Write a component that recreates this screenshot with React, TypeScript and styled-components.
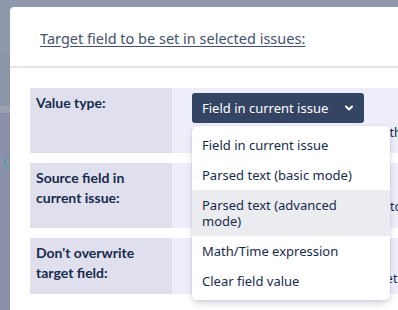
import React from 'react';
import styled, { createGlobalStyle } from 'styled-components';

const GlobalStyle = createGlobalStyle`
    html, body {
        margin: 0;
        padding: 0;
        overflow: hidden;
        background: #8d96aa;
    }
    body {
        font-family: "Noto Sans", "Open Sans", sans-serif;
    }
`;

const Backdrop = styled.div`
    width: 398px;
    height: 310px;
    padding: 7px 0 0 10px;
    box-sizing: border-box;
    background: linear-gradient(#8f99ab 0 53px, #8c96a9 53px 106px, #9aa1b2 106px 113px, #8a91a8 113px);
    position: relative;
    overflow: hidden;

    &::before {
        content: '';
        position: absolute;
        left: 4px;
        top: 156px;
        width: 11px;
        height: 11px;
        border: 1.5px solid #2aa3b8;
        border-radius: 50%;
    }
`;

const Modal = styled.div`
    position: relative;
    width: 460px;
    height: 340px;
    background: #fff;
    border-radius: 4px 0 0 0;
`;

const Header = styled.header`
    height: 59px;
    padding-left: 30px;
    display: flex;
    align-items: center;
    border-bottom: 2px solid #e4e5ef;
`;

const Title = styled.h2`
    margin: 2px 0 0;
    font-size: 14.5px;
    font-weight: 400;
    color: #42526e;
    text-decoration: underline;
    text-underline-offset: 2px;
`;

const Body = styled.div`
    padding: 20px 0 0 20px;
    display: flex;
    flex-direction: column;
    gap: 10px;
`;

const Row = styled.div<{ $h: number }>`
    display: grid;
    grid-template-columns: 142px 1fr;
    height: ${p => p.$h}px;
`;

const Label = styled.div`
    background: #dfdfee;
    padding: 5px 6px 0;
    font-family: "Lato", sans-serif;
    font-weight: 700;
    font-size: 14px;
    line-height: 19.5px;
    color: #172b4d;
`;

const Value = styled.div`
    background: #eeeefb;
    padding: 5px 0 0 20px;
    position: relative;
    font-size: 12.5px;
    color: #172b4d;
`;

const Hint = styled.div<{ $top: number }>`
    padding-top: ${p => p.$top}px;
    white-space: nowrap;
    line-height: 16px;
`;

const SelectButton = styled.button`
    width: 172px;
    height: 30px;
    padding: 0 10px;
    display: flex;
    align-items: center;
    justify-content: space-between;
    background: #344563;
    color: #fff;
    border: none;
    border-radius: 3px;
    font-family: "Noto Sans", "Open Sans", sans-serif;
    font-size: 13px;
`;

const Menu = styled.ul`
    position: absolute;
    left: 20px;
    top: 38px;
    width: 198px;
    margin: 0;
    padding: 4px 0;
    list-style: none;
    background: #fff;
    border-radius: 4px;
    box-shadow: 0 4px 8px -2px rgba(9, 30, 66, 0.25), 0 0 1px rgba(9, 30, 66, 0.31);
    z-index: 2;
`;

const Item = styled.li<{ $active?: boolean }>`
    padding: 7px 26px 7px 10px;
    font-size: 13px;
    line-height: 16px;
    color: #172b4d;
    background: ${p => (p.$active ? '#ebecf0' : 'transparent')};
`;

function Chevron() {
    return (
        <svg width="10" height="10" viewBox="0 0 10 10">
            <path d="M2 3.5 L5 6.5 L8 3.5" fill="none" stroke="#fff" strokeWidth="2" strokeLinecap="round" strokeLinejoin="round" />
        </svg>
    );
}

const options = [
    'Field in current issue',
    'Parsed text (basic mode)',
    'Parsed text (advanced mode)',
    'Math/Time expression',
    'Clear field value',
];

export default function App(): JSX.Element {
    return (
        <>
            <GlobalStyle />
            <Backdrop>
                <Modal>
                    <Header>
                        <Title>Target field to be set in selected issues:</Title>
                    </Header>
                    <Body>
                        <Row $h={65}>
                            <Label>Value type:</Label>
                            <Value>
                                <SelectButton>
                                    Field in current issue
                                    <Chevron />
                                </SelectButton>
                                <Hint $top={2}>Value will be taken from a field in the one</Hint>
                                <Menu>
                                    {options.map((o, i) => (
                                        <Item key={o} $active={i === 2}>{o}</Item>
                                    ))}
                                </Menu>
                            </Value>
                        </Row>
                        <Row $h={65}>
                            <Label>Source field in current issue:</Label>
                            <Value>
                                <Hint $top={31}>Select the field that will be used, stop</Hint>
                            </Value>
                        </Row>
                        <Row $h={56}>
                            <Label>Don't overwrite target field:</Label>
                            <Value>
                                <Hint $top={28}>Keep the current value if the target is set</Hint>
                            </Value>
                        </Row>
                    </Body>
                </Modal>
            </Backdrop>
        </>
    );
}
